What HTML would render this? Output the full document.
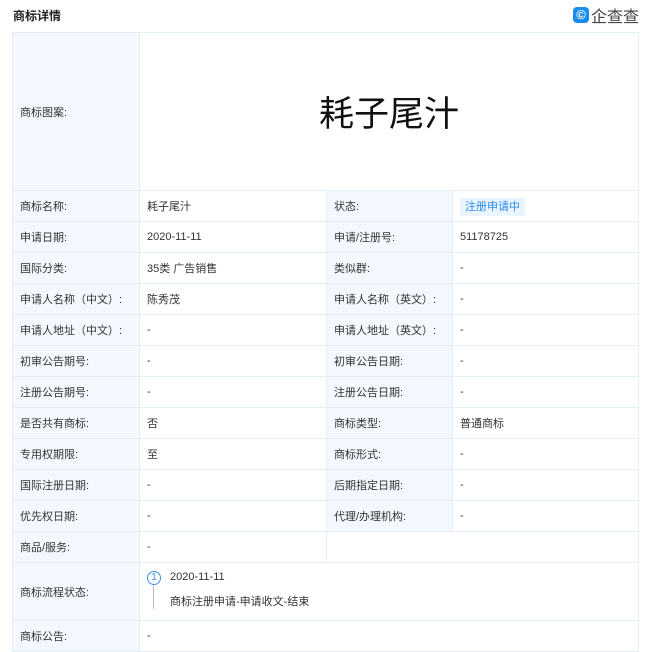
<!DOCTYPE html>
<html><head><meta charset="utf-8"><style>
body{margin:0;background:#fff;font-family:"Liberation Sans","Noto Sans CJK SC",sans-serif;color:#333;font-size:11px;width:650px;height:652px;overflow:hidden;position:relative}
.title{position:absolute;left:13px;top:7px;font-size:12px;font-weight:bold;color:#222}
.logo{position:absolute;left:573px;top:5px;height:20px;display:flex;align-items:center}
.logo .ic{width:16px;height:16px;background:#1a8ef0;border-radius:4px;color:#fff;font-size:13px;line-height:16px;text-align:center;font-weight:bold}
.logo span{font-size:16px;color:#444;margin-left:2px;letter-spacing:0}
table{position:absolute;left:12px;top:32px;border-collapse:collapse;width:626px;table-layout:fixed}
td{border:1px solid #e6eef5;height:30px;padding:0 0 0 7px;vertical-align:middle;white-space:nowrap}
td.l{background:#f2f8fe;color:#333}
.tag{background:#e9f4ff;color:#2a8cef;padding:3px 5px;font-size:11px}
</style></head><body>
<div class="title">商标详情</div>
<div class="logo"><div class="ic">©</div><span>企查查</span></div>
<table>
<colgroup><col style="width:127px"><col style="width:187px"><col style="width:126px"><col style="width:186px"></colgroup>
<tr><td class="l" style="height:157px">商标图案:</td><td colspan="3" style="text-align:center;font-size:35px;color:#111;padding:0">耗子尾汁</td></tr>
<tr><td class="l">商标名称:</td><td>耗子尾汁</td><td class="l">状态:</td><td><span class="tag">注册申请中</span></td></tr>
<tr><td class="l">申请日期:</td><td>2020-11-11</td><td class="l">申请/注册号:</td><td>51178725</td></tr>
<tr><td class="l">国际分类:</td><td>35类 广告销售</td><td class="l">类似群:</td><td>-</td></tr>
<tr><td class="l">申请人名称（中文）:</td><td>陈秀茂</td><td class="l">申请人名称（英文）:</td><td>-</td></tr>
<tr><td class="l">申请人地址（中文）:</td><td>-</td><td class="l">申请人地址（英文）:</td><td>-</td></tr>
<tr><td class="l">初审公告期号:</td><td>-</td><td class="l">初审公告日期:</td><td>-</td></tr>
<tr><td class="l">注册公告期号:</td><td>-</td><td class="l">注册公告日期:</td><td>-</td></tr>
<tr><td class="l">是否共有商标:</td><td>否</td><td class="l">商标类型:</td><td>普通商标</td></tr>
<tr><td class="l">专用权期限:</td><td>至</td><td class="l">商标形式:</td><td>-</td></tr>
<tr><td class="l">国际注册日期:</td><td>-</td><td class="l">后期指定日期:</td><td>-</td></tr>
<tr><td class="l">优先权日期:</td><td>-</td><td class="l">代理/办理机构:</td><td>-</td></tr>
<tr><td class="l">商品/服务:</td><td>-</td><td colspan="2"></td></tr>
<tr><td class="l" style="height:57px">商标流程状态:</td><td colspan="3" style="position:relative">
<div style="position:absolute;left:7px;top:8px;width:12px;height:12px;border:1px solid #3b95ea;border-radius:50%;color:#3b95ea;font-size:10px;line-height:12px;text-align:center">1</div>
<div style="position:absolute;left:13px;top:22px;width:1px;height:24px;background:#bbb"></div>
<div style="position:absolute;left:30px;top:8px">2020-11-11</div>
<div style="position:absolute;left:30px;top:30px">商标注册申请-申请收文-结束</div>
</td></tr>
<tr><td class="l">商标公告:</td><td colspan="3">-</td></tr>
</table>
</body></html>
